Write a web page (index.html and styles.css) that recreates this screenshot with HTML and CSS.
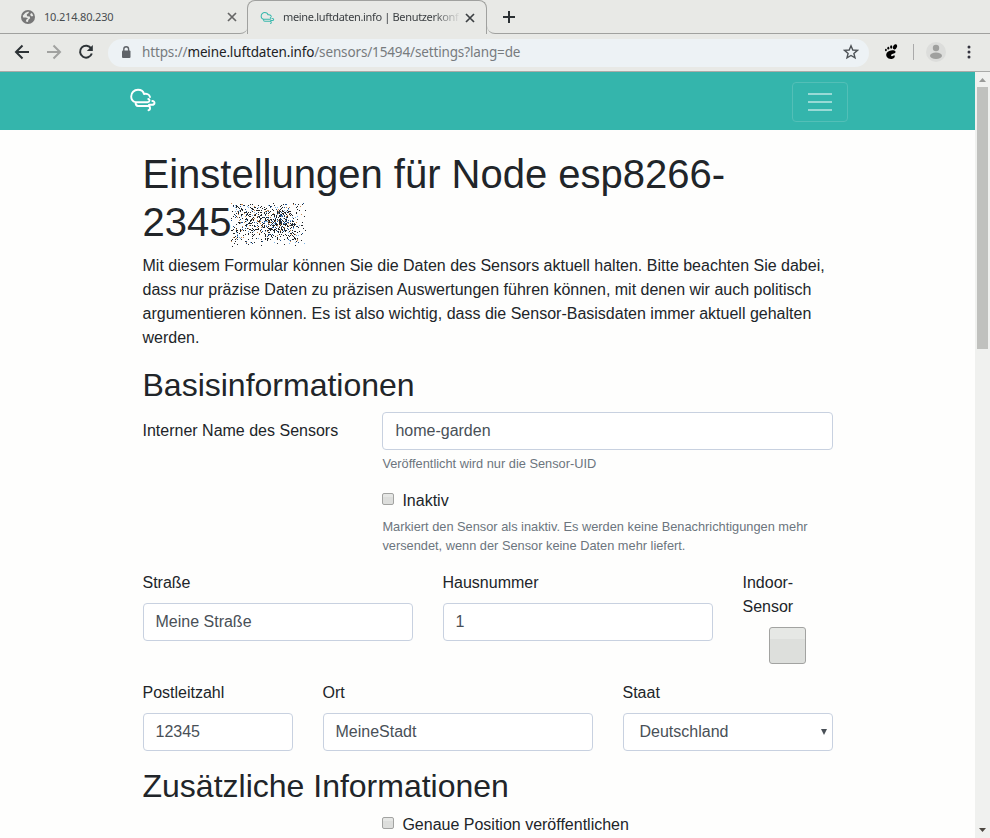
FILE: index.html
```html
<!DOCTYPE html>
<html lang="de">
<head>
<meta charset="utf-8">
<title>meine.luftdaten.info | Benutzerkonfiguration</title>
<link rel="stylesheet" href="styles.css">
</head>
<body>
<svg class="defs" width="0" height="0">
  <symbol id="cloud" viewBox="0 0 28 26">
    <path d="M6.500 15.200C3.800 14.500 2.200 12 2.200 9.500C2.200 5.800 5 2.800 9 2.800C12 2.800 14.400 4.500 15 7C17.800 6.200 20.300 7.500 21 10M6.500 15.200H18.500C21 15.200 21 12 19.300 12M6.500 15.200C6.500 18 7 19 9 19H19C21.800 19 21.500 23 19.500 23.200M23.300 14C26.300 14 26.300 17.800 23 17.800H20"/>
  </symbol>
</svg>
<header class="browser">
  <div class="tabs">
    <div class="tab">
      <svg class="globe" viewBox="0 0 16 16"><circle cx="8" cy="8" r="8"/><path d="M2 6.500L5 3L8.500 1.800L9 3L6.500 5L7 7L10 7.500L10.500 9.500L8.500 11L8 13.800L5.500 13L6 11L8 9.500L5.500 8.500L2.500 8.500ZM10.500 4.500L12.500 3.500L14 6.500L12.500 7.500L11 6.500Z"/></svg>
      <span class="tab-title">10.214.80.230</span>
      <svg class="close" viewBox="0 0 10 10"><path d="M1 1L9 9M9 1L1 9"/></svg>
    </div>
    <div class="tab active">
      <svg class="tab-cloud"><use href="#cloud"/></svg>
      <span class="tab-title fade">meine.luftdaten.info | Benutzerkonfi</span>
      <svg class="close dark" viewBox="0 0 10 10"><path d="M1 1L9 9M9 1L1 9"/></svg>
    </div>
    <div class="newtab"><svg viewBox="0 0 12 12"><path d="M6 0V12M0 6H12"/></svg></div>
  </div>
  <div class="toolbar">
    <svg class="nav-icon" viewBox="0 0 16 16"><path d="M15 8H2M8.500 1.500L2 8L8.500 14.500"/></svg>
    <svg class="nav-icon off" viewBox="0 0 16 16"><path d="M1 8H14M7.500 1.500L14 8L7.500 14.500"/></svg>
    <svg class="nav-icon" viewBox="0 0 16 16"><path d="M13.200 4.500A6 6 0 1 0 13.800 9.500"/><path class="solid" d="M14.800 1V7H8.800Z"/></svg>
    <div class="omnibox">
      <svg class="lock" viewBox="0 0 10 12"><rect x="1" y="4.500" width="8.500" height="7.500" rx="1"/><path d="M2.800 5V3.200A2.400 2.400 0 0 1 7.600 3.200V5"/></svg>
      <span class="url">https://<b>meine.luftdaten.info</b>/sensors/15494/settings?lang=de</span>
      <svg class="star" viewBox="0 0 16 16"><path d="M8 1.800L9.800 6L14.400 6.400L10.900 9.400L12 13.900L8 11.500L4 13.900L5.100 9.400L1.600 6.400L6.200 6Z"/></svg>
    </div>
    <svg class="foot" viewBox="0 0 14 16"><ellipse cx="11" cy="2.800" rx="1.900" ry="2.700" transform="rotate(25 11 2.800)"/><ellipse cx="7.200" cy="3" rx="1.100" ry="1.700"/><ellipse cx="4.300" cy="4.200" rx="1" ry="1.400"/><ellipse cx="1.900" cy="6" rx=".9" ry="1.200"/><path d="M11.300 7.300C10 5.600 4.500 6.300 2.800 8.800C1 11.800 3.500 15 7 15C10 15 11.500 12.500 10.500 11.500C9.600 10.800 9 12.500 7.800 12.200C6.500 11.800 7 10.400 8.300 10C10.500 9.400 12.300 8.800 11.300 7.300Z"/></svg>
    <span class="divider"></span>
    <svg class="avatar" viewBox="0 0 20 20"><circle class="ring" cx="10" cy="10" r="10"/><circle cx="10" cy="6" r="3.200"/><ellipse cx="10" cy="13.700" rx="6" ry="3.200"/></svg>
    <svg class="dots" viewBox="0 0 4 14"><circle cx="2" cy="2" r="1.500"/><circle cx="2" cy="7" r="1.500"/><circle cx="2" cy="12" r="1.500"/></svg>
  </div>
</header>
<div class="viewport">
  <div class="page">
    <nav class="navbar">
      <div class="nav-inner">
        <svg class="brand"><use href="#cloud"/></svg>
        <button class="toggler" aria-label="Menü"><i></i><i></i><i></i></button>
      </div>
    </nav>
    <main class="container">
      <h1>Einstellungen für Node esp8266-<br>2345<svg id="scrub" class="scrub" viewBox="0 0 76 44"></svg></h1>
      <p>Mit diesem Formular können Sie die Daten des Sensors aktuell halten. Bitte beachten Sie dabei, dass nur präzise Daten zu präzisen Auswertungen führen können, mit denen wir auch politisch argumentieren können. Es ist also wichtig, dass die Sensor-Basisdaten immer aktuell gehalten werden.</p>
      <h2>Basisinformationen</h2>
      <div class="row name-row">
        <label class="c4 inline-label">Interner Name des Sensors</label>
        <div class="c8">
          <div class="control">home-garden</div>
          <small>Veröffentlicht wird nur die Sensor-UID</small>
        </div>
      </div>
      <div class="row">
        <div class="c8 push">
          <div class="check"><span class="box"></span>Inaktiv</div>
          <small>Markiert den Sensor als inaktiv. Es werden keine Benachrichtigungen mehr versendet, wenn der Sensor keine Daten mehr liefert.</small>
        </div>
      </div>
      <div class="row">
        <div class="c5"><label>Straße</label><div class="control">Meine Straße</div></div>
        <div class="c5"><label>Hausnummer</label><div class="control">1</div></div>
        <div class="c2"><label>Indoor-Sensor</label><span class="bigbox"></span></div>
      </div>
      <div class="row">
        <div class="c3"><label>Postleitzahl</label><div class="control">12345</div></div>
        <div class="c5"><label>Ort</label><div class="control">MeineStadt</div></div>
        <div class="c4"><label>Staat</label><div class="control select">Deutschland<svg viewBox="0 0 6 6"><path d="M0 0H6L3 6Z"/></svg></div></div>
      </div>
      <h2>Zusätzliche Informationen</h2>
      <div class="row">
        <div class="c8 push"><div class="check"><span class="box"></span>Genaue Position veröffentlichen</div></div>
      </div>
    </main>
  </div>
  <div class="scrollbar">
    <svg class="up" viewBox="0 0 7 4"><path d="M0 4L3.500 0L7 4Z"/></svg>
    <div class="thumb"></div>
    <svg class="down" viewBox="0 0 7 4"><path d="M0 0L3.500 4L7 0Z"/></svg>
  </div>
</div>
<script src="scrub.js"></script>
</body>
</html>
```
FILE: styles.css
```css
* { box-sizing: border-box; }
html, body { margin: 0; height: 100%; overflow: hidden; }
body {
  display: flex; flex-direction: column; background: #fefefd; color: #212529;
  font: 16px/1.5 "Liberation Sans", Arial, sans-serif;
}
svg { display: block; flex: none; }
.defs { position: absolute; }
#cloud path { fill: none; stroke: currentColor; stroke-width: 1.9; stroke-linecap: round; stroke-linejoin: round; }

.browser { height: 72px; flex: none; background: #e8e9e6; border-bottom: 1px solid #a9aaa8; font-family: "Noto Sans", sans-serif; }
.tabs { display: flex; height: 34px; }
.tab { display: flex; align-items: center; width: 248px; padding: 0 11px 0 21px; border-bottom: 1px solid #a0a19f; border-bottom-right-radius: 8px; font-size: 11px; letter-spacing: -.18px; color: #494d50; }
.tab.active { width: 240px; margin-left: -1px; padding: 0 11px 0 12px; border: 1px solid #a0a19f; border-bottom: 0; border-radius: 8px 8px 0 0; letter-spacing: -.34px; color: #3c4043; }
.tab-title { flex: 1; min-width: 0; padding-top: 1px; white-space: nowrap; }
.active .tab-title { padding-top: 0; }
.globe { width: 14px; height: 14px; margin-right: 9px; fill: #777; }
.globe path { fill: #e8e9e6; }
.tab-cloud { width: 15px; height: 14px; margin-right: 8px; color: #38b8ac; }
.fade { -webkit-mask-image: linear-gradient(90deg, #000 150px, transparent 178px); mask-image: linear-gradient(90deg, #000 150px, transparent 178px); }
.close { width: 10px; height: 10px; margin-left: 6px; fill: none; stroke: #666; stroke-width: 1.7; }
.close.dark { stroke: #3c4043; }
.newtab { flex: 1; padding: 11px 0 0 16px; border-bottom: 1px solid #a0a19f; border-bottom-left-radius: 8px; }
.newtab svg { width: 12px; height: 12px; stroke: #2b3033; stroke-width: 2; }
.toolbar { display: flex; align-items: center; height: 37px; padding: 0 19px 0 14px; }
.nav-icon { width: 16px; height: 16px; margin-right: 16px; margin-top: -1px; fill: none; stroke: #2d3336; stroke-width: 2; }
.nav-icon.off { stroke: #a1a2a0; }
.nav-icon .solid { fill: #2d3336; stroke: none; }
.omnibox { display: flex; align-items: center; width: 761px; height: 28px; margin-left: -2px; padding: 0 10px 0 13px; background: #edf2f5; border-radius: 14px; }
.lock { width: 10px; height: 12px; margin: -2px 11px 0 0; fill: #5f6368; }
.lock path { fill: none; stroke: #5f6368; stroke-width: 1.4; }
.url { flex: 1; padding-bottom: 1px; font-size: 13.5px; letter-spacing: -.14px; color: #777b7e; }
.url b { font-weight: 400; color: #202124; }
.star { width: 16px; height: 16px; margin-top: -1px; fill: none; stroke: #4e5357; stroke-width: 1.4; }
.foot { width: 14px; height: 16px; margin: -1px 0 0 15px; }
.divider { width: 1px; height: 16px; margin: -2px 13px 0 15px; background: #aaa; }
.avatar { width: 20px; height: 20px; margin-top: -2px; margin-left: -1px; fill: #9fa09e; }
.avatar .ring { fill: #dcdddb; }
.dots { width: 4px; height: 14px; margin: -1px 0 0 auto; fill: #34343f; }

.viewport { display: flex; flex: 1; min-height: 0; }
.page { flex: 1; overflow: hidden; }
.navbar { height: 58px; background: #34b5ac; }
.nav-inner { display: flex; align-items: flex-start; justify-content: space-between; width: 720px; margin: 0 auto; padding-top: 10px; }
.brand { width: 28px; height: 26px; margin: 5px 0 0 1.5px; color: #fff; }
.toggler { display: flex; flex-direction: column; align-items: center; justify-content: center; gap: 6px; width: 56px; height: 40px; padding: 0; border: 1px solid #53bfb7; border-radius: 4px; background: none; }
.toggler i { width: 24px; height: 2px; background: #99dad6; }
.container { width: 720px; margin: 0 auto; padding: 20px 15px 0; }
h1, h2 { margin: 0 0 8px; font-weight: 400; line-height: 1.2; }
h1 { font-size: 40px; }
h2 { font-size: 32px; }
p { margin: 0 0 16px; }
.scrub { display: inline-block; width: 76px; height: 44px; margin: -12px 0 -2px 0; vertical-align: -9px; }
.row { display: flex; margin: 0 -15px 16px; }
.name-row { margin-bottom: 15px; }
.row > * { flex: none; padding: 0 15px; }
.c2 { width: 120px; } .c3 { width: 180px; } .c4 { width: 240px; } .c5 { width: 300px; } .c8 { width: 480.3px; }
.push { margin-left: 239.9px; }
label { display: block; margin-bottom: 8px; }
.row > .inline-label { width: 239.9px; padding-top: 7px; margin: 0; }
.control { height: 38px; padding: 6px 12px; border: 1px solid #c8d1e0; border-radius: 4px; color: #495057; background: #fff; }
small { display: block; margin-top: 4px; font-size: 12.8px; line-height: 19.2px; color: #6c757d; }
.check { display: flex; }
.box { width: 12px; height: 12px; margin: 4px 8px 0 0; border: 1px solid #a2a3a1; border-radius: 2px; background: linear-gradient(#e6e7e5 30%, #dddedc 30%); }
.bigbox { display: block; width: 37px; height: 37px; margin: 0 auto 1px; border: 1px solid #a2a3a1; border-radius: 3px; background: linear-gradient(#e6e8e5 30%, #dddfdc 30%); }
.select { display: flex; align-items: center; justify-content: space-between; padding: 0 5px 0 16px; }
.select svg { width: 6px; height: 6px; fill: #495057; }
.scrollbar { display: flex; flex-direction: column; align-items: center; width: 15px; background: #f0f1ef; }
.scrollbar svg { width: 7px; height: 4px; }
.up { margin: 6px 0 5px; fill: #999a98; }
.thumb { width: 11px; height: 262px; background: #c0c1be; }
.down { margin: auto 0 6px; fill: #4c4740; }
```
FILE: scrub.js
```js
// Scatter of single-pixel specks that hides the end of the node id.
let seed = 4711;
const rand = () => (seed = (seed * 16807) % 2147483647) / 2147483647;
const colours = ["#212529", "#212529", "#212529", "#212529", "#212529", "#c98a50", "#7fb6e8", "#1f4f8a"];
let out = "";
for (let y = 0; y < 44; y++) {
  for (let x = 0; x < 76; x++) {
    const edge = Math.min(1, (76 - x) / 22, (x + 8) / 16, (y + 3) / 12, (44 - y) / 18);
    const core = Math.exp(-(((x - 46) / 16) ** 2) - ((y - 19) / 8) ** 2);
    if (rand() < edge * (0.3 + 0.25 * core)) {
      out += `<rect x="${x}" y="${y}" width="1" height="1" shape-rendering="crispEdges" fill="${colours[Math.floor(rand() * colours.length)]}"/>`;
    }
  }
}
document.getElementById("scrub").innerHTML = out;
```
